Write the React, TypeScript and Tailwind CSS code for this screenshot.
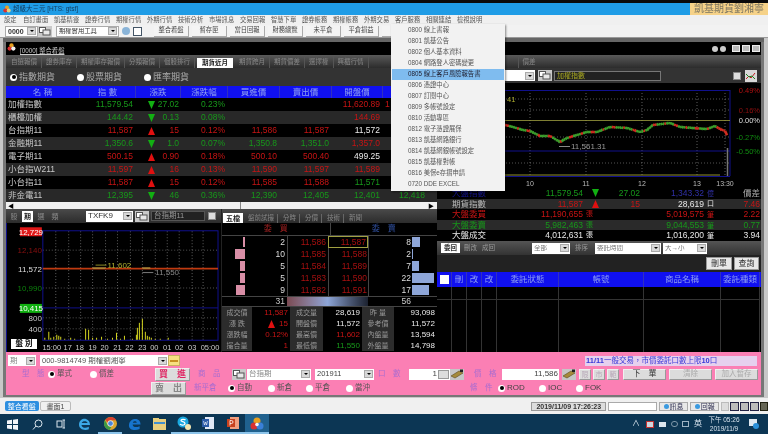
import React from "react";

const R = "text-[#c81414]";
const G = "text-[#17981a]";
const W = "text-[#e8e8e8]";

function Tri({ up, className = "" }: { up: boolean; className?: string }) {
  return (
    <svg width="7" height="8" viewBox="0 0 7 8" className={"shrink-0 " + className}>
      <polygon points={up ? "3.5,0 7,8 0,8" : "0,0 7,0 3.5,8"} fill={up ? "#e01010" : "#12b012"} />
    </svg>
  );
}

function Radio({ on, label, className = "" }: { on?: boolean; label?: string; className?: string }) {
  return (
    <span className={"inline-flex items-center gap-[2px] " + className}>
      <span className="w-[7px] h-[7px] rounded-full bg-white flex items-center justify-center shrink-0">
        {on && <span className="w-[4px] h-[4px] rounded-full bg-black" />}
      </span>
      {label && <span>{label}</span>}
    </span>
  );
}

function Select({ label, className = "", text = "text-[#333]" }: { label: string; className?: string; text?: string }) {
  return (
    <div className={"h-[11px] bg-white flex items-center justify-between pl-[2px] pr-[1px] leading-none " + text + " " + className}>
      <span className="truncate">{label}</span>
      <span className="w-[9px] h-[8px] bg-[#d8d8d8] border border-[#aaa] flex items-center justify-center shrink-0">
        <span className="w-0 h-0 border-x-[2px] border-x-transparent border-t-[2px] border-t-black" />
      </span>
    </div>
  );
}

function PicIcon() {
  return (
    <svg width="14" height="11" viewBox="0 0 14 11" className="shrink-0">
      <rect width="14" height="11" fill="#c9c9c9" />
      <rect x="1.5" y="1.5" width="6" height="5" fill="#fff" stroke="#555" />
      <rect x="5" y="4" width="7" height="5" fill="#e8e8e8" stroke="#555" />
    </svg>
  );
}

function MoneyIcon() {
  return (
    <svg width="14" height="11" viewBox="0 0 14 11" className="shrink-0">
      <rect width="14" height="11" fill="#c6c6c6" />
      <polygon points="1,7 9,2 13,4 5,9" fill="#a58a3a" stroke="#5a4a20" strokeWidth="0.6" />
      <rect x="10" y="0.5" width="3" height="2.5" fill="#222" />
    </svg>
  );
}

const menuBar = ["自訂畫面", "凱基精靈", "證券行情", "期權行情", "外期行情", "技術分析", "市場訊息", "交易回報", "智慧下單", "證券帳務", "期權帳務", "外期交易", "客戶服務", "相關連結", "檢視說明"];
const toolButtons = ["整合看盤", "暫存匣", "當日回報", "財務總覽", "未平倉", "平倉損益", "技術"];
const tabs = ["自選報價", "證券庫存", "期權庫存報價", "分類報價", "個股排行", "期貨近月", "期貨跨月", "期貨價差", "選擇權", "興櫃行情", "價差"];
const menuItems = ["0800 線上書報", "0801 凱基公告", "0802 個人基本資料", "0804 網路登人密碼變更", "0805 線上客戶風險報告書", "0806 憑證中心", "0807 訂閱中心", "0809 多帳號設定", "0810 活動專區", "0812 電子憑證展保", "0813 凱基網路銀行", "0814 凱基網銀帳號設定", "0815 凱基權對帳", "0816 美保e存摺申請", "0720 DDE EXCEL"];

type Cell = [string, string];
const quotes: { n: string; p: Cell; up: boolean; ch: string; pct: string; b: Cell; s: Cell; o: Cell; h: Cell }[] = [
  { n: "加權指數", p: ["11,579.54", G], up: false, ch: "27.02", pct: "0.23%", b: ["", G], s: ["", G], o: ["11,620.89", R], h: ["1", R] },
  { n: "櫃檯加權", p: ["144.42", G], up: false, ch: "0.13", pct: "0.08%", b: ["", G], s: ["", G], o: ["144.69", R], h: ["", R] },
  { n: "台指期11", p: ["11,587", R], up: true, ch: "15", pct: "0.12%", b: ["11,586", R], s: ["11,587", R], o: ["11,572", W], h: ["", R] },
  { n: "金融期11", p: ["1,350.6", G], up: false, ch: "1.0", pct: "0.07%", b: ["1,350.8", G], s: ["1,351.0", G], o: ["1,357.0", R], h: ["", R] },
  { n: "電子期11", p: ["500.15", R], up: true, ch: "0.90", pct: "0.18%", b: ["500.10", R], s: ["500.40", R], o: ["499.25", W], h: ["", R] },
  { n: "小台指W211", p: ["11,597", R], up: true, ch: "16", pct: "0.13%", b: ["11,590", R], s: ["11,597", R], o: ["11,589", R], h: ["", R] },
  { n: "小台指11", p: ["11,587", R], up: true, ch: "15", pct: "0.12%", b: ["11,585", R], s: ["11,588", R], o: ["11,571", G], h: ["", R] },
  { n: "非金電11", p: ["12,395", G], up: false, ch: "46", pct: "0.36%", b: ["12,390", G], s: ["12,405", G], o: ["12,401", G], h: ["12,418", G] },
];
const headers = ["名 稱", "指 數", "漲跌", "漲跌幅", "買進價", "賣出價", "開盤價", ""];

function pctColor(up: boolean) {
  return up ? R : G;
}

function MainChart() {
  const pts: [number, number][] = [[440, 120], [505, 125], [513, 127], [523, 130], [530, 131], [540, 136], [550, 136], [560, 142], [567, 138], [577, 135], [587, 132], [597, 132], [610, 127], [627, 128], [640, 132], [647, 130], [653, 125], [670, 123], [680, 127], [693, 128], [707, 129], [715, 126], [720, 129], [725, 131], [727, 135]];
  const segs: React.ReactNode[] = [];
  let i = 0;
  for (let k = 0; k < pts.length - 1; k++) {
    const [x0, y0] = pts[k];
    const [x1, y1] = pts[k + 1];
    const n = Math.max(1, Math.round((x1 - x0) / 2));
    for (let j = 0; j < n; j++) {
      const a = j / n;
      const b = (j + 1) / n;
      const jit = ((i * 37) % 5) * 0.3 - 0.6;
      const red = (i * 13) % 11 < 3 || x0 > 716;
      segs.push(
        <line key={i} x1={x0 + (x1 - x0) * a} y1={y0 + (y1 - y0) * a + jit} x2={x0 + (x1 - x0) * b} y2={y0 + (y1 - y0) * b - jit} stroke={red ? "#d02c20" : "#3c9e2c"} strokeWidth="2.6" />
      );
      i++;
    }
  }
  const vs = [530, 586, 642, 697, 725];
  return (
    <svg width="323" height="105" viewBox="437 83 323 105" className="block bg-black font-['Liberation_Sans',sans-serif]">
      {[99, 110, 137, 163].map((y) => (
        <line key={y} x1="440" x2="730" y1={y} y2={y} stroke="#777" strokeDasharray="1 2" strokeWidth="0.7" />
      ))}
      {vs.map((x) => (
        <line key={x} x1={x} x2={x} y1="90" y2="176" stroke="#888" strokeDasharray="1 2" strokeWidth="0.7" />
      ))}
      <line x1="440" x2="730" y1="90.5" y2="90.5" stroke="#10108c" />
      <line x1="440" x2="730" y1="151" y2="151" stroke="#10108c" />
      <line x1="440" x2="730" y1="176.5" y2="176.5" stroke="#10108c" />
      <line x1="730" x2="730" y1="90" y2="176" stroke="#10108c" />
      <line x1="440" x2="730" y1="120.5" y2="120.5" stroke="#a0a040" strokeWidth="0.8" />
      {segs}
      <line x1="440" x2="720" y1="175" y2="175" stroke="#8f8f30" strokeWidth="1.2" />
      <line x1="727.5" x2="727.5" y1="148" y2="176" stroke="#777" strokeWidth="1.5" />
      <line x1="559" x2="570" y1="146.5" y2="146.5" stroke="#aaa" strokeWidth="0.8" />
      <text x="571" y="149" fontSize="8" fill="#999">11,561.31</text>
      <text x="507" y="102" fontSize="7.5" fill="#b0b030">41</text>
      <g fontSize="7.5" textAnchor="end">
        <text x="760" y="93" fill="#b01010">0.49%</text>
        <text x="760" y="113" fill="#900f0f">0.16%</text>
        <text x="760" y="123" fill="#dddddd">0.00%</text>
        <text x="760" y="140" fill="#108a10">-0.27%</text>
        <text x="760" y="154" fill="#108a10">-0.50%</text>
      </g>
      <g fontSize="7" fill="#bbbbbb" textAnchor="middle">
        <text x="530" y="186">10</text>
        <text x="586" y="186">11</text>
        <text x="642" y="186">12</text>
        <text x="697" y="186">13</text>
        <text x="725" y="186">13:30</text>
      </g>
    </svg>
  );
}

function KChart() {
  const xs = [55, 68, 80, 92, 105, 117, 130, 142, 155, 167, 179, 192, 203];
  const bars: [number, number][] = [[44, 2], [48, 8], [50, 2], [53, 3], [56, 5], [58, 4], [60, 3], [64, 1], [70, 2], [74, 1], [85, 11], [88, 10], [92, 2], [96, 2], [101, 3], [107, 1], [112, 2], [116, 7], [120, 1], [124, 4], [132, 1], [136, 5], [137, 12], [139, 17], [142, 21], [145, 8], [147, 4], [149, 3], [151, 2], [155, 1], [160, 1], [168, 2]];
  const labels: [string, number][] = [["15:00", 51], ["17", 67], ["18", 79], ["19", 92], ["20", 104], ["21", 117], ["22", 129], ["23", 142], ["00", 154], ["01", 167], ["02", 179], ["03", 192], ["05:00", 210]];
  return (
    <svg width="214" height="129" viewBox="6 223 214 129" className="block bg-black font-['Liberation_Sans',sans-serif] border-l border-[#10108c]">
      {[250, 288, 318, 329].map((y) => (
        <line key={y} x1="42" x2="218" y1={y} y2={y} stroke="#777" strokeDasharray="1 2" strokeWidth="0.7" />
      ))}
      {xs.map((x) => (
        <line key={x} x1={x} x2={x} y1="231" y2="340" stroke="#888" strokeDasharray="1 2" strokeWidth="0.7" />
      ))}
      <rect x="42" y="230.5" width="176" height="110" fill="none" stroke="#10108c" />
      <line x1="42" x2="218" y1="308" y2="308" stroke="#10108c" />
      <line x1="42" x2="218" y1="268.5" y2="268.5" stroke="#c03a10" strokeWidth="1.6" />
      <line x1="92" x2="105" y1="268" y2="268" stroke="#a8883a" strokeWidth="1.6" />
      <line x1="142" x2="150" y1="268" y2="268" stroke="#a8883a" strokeWidth="1.6" />
      <line x1="95" x2="106" y1="265" y2="265" stroke="#b0b030" strokeWidth="0.8" />
      <text x="107" y="268" fontSize="8" fill="#b0b030">11,602</text>
      <line x1="142" x2="153" y1="272.5" y2="272.5" stroke="#999" strokeWidth="0.8" />
      <text x="155" y="275" fontSize="8" fill="#888">11,550</text>
      {bars.map(([x, h]) => (
        <line key={x} x1={x} x2={x} y1={340} y2={340 - h} stroke="#d8d820" strokeWidth="1" />
      ))}
      <rect x="19" y="227" width="22" height="9" fill="#e01818" />
      <text x="30" y="234.5" fontSize="8" fill="#fff" textAnchor="middle">12,729</text>
      <text x="41" y="253" fontSize="8" fill="#8a1010" textAnchor="end">12,140</text>
      <text x="41" y="272" fontSize="8" fill="#dddddd" textAnchor="end">11,572</text>
      <text x="41" y="291" fontSize="8" fill="#0c800c" textAnchor="end">10,990</text>
      <rect x="19" y="304" width="22" height="9" fill="#10b010" />
      <text x="30" y="311.5" fontSize="8" fill="#fff" textAnchor="middle">10,415</text>
      <text x="41" y="321" fontSize="8" fill="#cccccc" textAnchor="end">800</text>
      <text x="41" y="332" fontSize="8" fill="#cccccc" textAnchor="end">400</text>
      {labels.map(([t, x]) => (
        <text key={t} x={x} y="350" fontSize="7.5" fill="#cccccc" textAnchor="middle">{t}</text>
      ))}
    </svg>
  );
}

const levels = [
  { bq: 2, bw: 2, bp: "11,586", sp: "11,587", sq: 8, sw: 8, hl: true },
  { bq: 10, bw: 10, bp: "11,585", sp: "11,588", sq: 2, sw: 1 },
  { bq: 5, bw: 5, bp: "11,584", sp: "11,589", sq: 7, sw: 7 },
  { bq: 5, bw: 5, bp: "11,583", sp: "11,590", sq: 22, sw: 22 },
  { bq: 9, bw: 9, bp: "11,582", sp: "11,591", sq: 17, sw: 17 },
];
const barW: Record<number, string> = { 1: "w-[1px]", 2: "w-[2px]", 5: "w-[5px]", 7: "w-[7px]", 8: "w-[8px]", 9: "w-[9px]", 10: "w-[10px]", 17: "w-[17px]", 22: "w-[22px]" };

const info: [string, string, string, string, string, string, string, string, string][] = [
  ["成交價", "11,587", R, "成交量", "28,619", W, "昨 量", "93,098", W],
  ["漲 跌", "15", R, "開盤價", "11,572", W, "參考價", "11,572", W],
  ["漲跌幅", "0.12%", R, "最高價", "11,602", R, "內盤量", "13,594", W],
  ["撮合量", "1", R, "最低價", "11,550", G, "外盤量", "14,798", W],
];

const idx: { n: string; nc: string; a: string; ac: string; au?: string; tri?: boolean; up?: boolean; ch?: string; b: string; bc: string; bu: string; c: string; cc: string; bg: string }[] = [
  { n: "大盤指數", nc: "text-[#14148c]", a: "11,579.54", ac: G, tri: true, up: false, ch: "27.02", b: "1,343.32", bc: "text-[#3030a8]", bu: "億", c: "價差", cc: "text-[#aaa]", bg: "bg-black" },
  { n: "期貨指數", nc: "text-[#bbb]", a: "11,587", ac: R, tri: true, up: true, ch: "15", b: "28,619", bc: W, bu: "口", c: "7.46", cc: R, bg: "bg-[#2a2a2a]" },
  { n: "大盤委買", nc: R, a: "11,190,655", ac: R, au: "張", b: "5,019,575", bc: R, bu: "筆", c: "2.22", cc: R, bg: "bg-black" },
  { n: "大盤委賣", nc: G, a: "5,982,463", ac: G, au: "張", b: "9,044,553", bc: G, bu: "筆", c: "0.77", cc: G, bg: "bg-[#2a2a2a]" },
  { n: "大盤成交", nc: W, a: "4,012,631", ac: W, au: "張", b: "1,016,200", bc: W, bu: "筆", c: "3.94", cc: W, bg: "bg-black" },
];

const orderHead = ["", "刪", "改", "改", "委託狀態", "帳號", "商品名稱", "委託種類"];

function PinkBtn({ children, className = "" }: { children: React.ReactNode; className?: string }) {
  return (
    <div className={"bg-[#dcdcdc] border border-[#f0f0f0] border-b-[#999] border-r-[#999] flex items-center justify-center leading-none " + className}>
      {children}
    </div>
  );
}

function TaskIcons() {
  return (
    <>
      <div className="w-[25px] flex items-center justify-center">
        <svg width="11" height="11" viewBox="0 0 11 11"><path d="M0 1.5L5 .8V5H0zM6 .7L11 0v5H6zM0 6h5v4.2L0 9.5zM6 6h5v5L6 10.3z" fill="#f2f6fa" /></svg>
      </div>
      <div className="w-[24px] flex items-center justify-center">
        <svg width="11" height="11" viewBox="0 0 11 11" fill="none" stroke="#dbe6ee" strokeWidth="1"><circle cx="6.5" cy="4.5" r="3.5" /><path d="M4 7L1 10.5" /></svg>
      </div>
      <div className="w-[23px] flex items-center justify-center">
        <svg width="10" height="10" viewBox="0 0 10 10" fill="none" stroke="#dbe6ee" strokeWidth="1"><rect x="1" y="2" width="5" height="6" /><path d="M8 1v8M6.5 1H9M6.5 9H9" /></svg>
      </div>
      <div className="w-[26px] flex items-center justify-center">
        <svg width="14" height="14" viewBox="0 0 14 14" fill="none"><path d="M12 8H3.5C3.7 10.8 7.5 11.8 10.8 9.8v2.4C6.8 14 1 12.5 1 7.5 1 3 5.5 1 8 2c2.8 1 4 3.3 4 6zM9.5 6C9.5 3.8 4.3 3.5 3.7 6z" fill="#3ba7e4" /></svg>
      </div>
      <div className="w-[24px] h-full flex items-center justify-center border-b-2 border-[#8cc4ea]">
        <svg width="13" height="13" viewBox="0 0 14 14"><circle cx="7" cy="7" r="7" fill="#d9a62e" /><path d="M7 0a7 7 0 016.1 3.5H7A3.5 3.5 0 003.6 6L1.7 2.6A7 7 0 017 0z" fill="#d8412f" /><path d="M1 3.5L4.3 9.5A3.5 3.5 0 008 10.4L6 14A7 7 0 011 3.5z" fill="#3a9a46" /><circle cx="7" cy="7" r="3" fill="#4a86d8" stroke="#fff" strokeWidth="0.8" /></svg>
      </div>
      <div className="w-[25px] flex items-center justify-center">
        <svg width="13" height="13" viewBox="0 0 14 14"><path d="M1 8C1 3 5 1 8 1c3.5 0 5.5 2.5 5.5 6H5c.2 3 4 3.5 7.5 1.8v3C7.5 14.2 1 13 1 8zM9.5 5C9 3 6 3 5.2 5z" fill="#1774cc" /></svg>
      </div>
      <div className="w-[24px] h-full flex items-center justify-center">
        <svg width="13" height="12" viewBox="0 0 13 12"><rect y="1" width="13" height="11" fill="#e8cf7e" /><rect x="1" y="4" width="11" height="2" fill="#3f8fd0" /><rect y="0" width="6" height="2" fill="#e8cf7e" /></svg>
      </div>
      <div className="w-[25px] h-full flex items-center justify-center border-b-2 border-[#8cc4ea]">
        <svg width="14" height="14" viewBox="0 0 14 14"><circle cx="6" cy="6" r="5.5" fill="#19a8e0" /><path d="M3 8c1 1.5 5 1.5 5-.5S4 6 4 4.5 7.500 3 8.500 4" stroke="#fff" strokeWidth="1.3" fill="none" /><circle cx="11" cy="11" r="3" fill="#f2e6b0" /></svg>
      </div>
      <div className="w-[24px] h-full flex items-center justify-center border-b-2 border-[#8cc4ea]">
        <svg width="12" height="12" viewBox="0 0 12 12"><rect x="3" y="0" width="9" height="12" fill="#dfe8f6" /><rect x="0" y="2" width="7" height="8" fill="#2a5ba8" /><path d="M1.500 4l1 4 1-3 1 3 1-4" stroke="#fff" strokeWidth="0.6" fill="none" /></svg>
      </div>
      <div className="w-[25px] h-full flex items-center justify-center border-b-2 border-[#8cc4ea]">
        <svg width="12" height="12" viewBox="0 0 12 12"><rect x="3" y="0" width="9" height="12" fill="#f0a080" /><rect x="0" y="2" width="8" height="8" fill="#c8421e" /><path d="M3 8.500V3.500h1.500a1.300 1.300 0 010 3H3" stroke="#fff" strokeWidth="0.8" fill="none" /></svg>
      </div>
      <div className="w-[24px] h-full flex items-center justify-center bg-[#20618e] border-b-2 border-[#8cc4ea]">
        <svg width="14" height="13" viewBox="0 0 14 13"><circle cx="7" cy="4" r="3.500" fill="#e8a020" /><circle cx="4" cy="9" r="3.500" fill="#d83030" /><circle cx="10" cy="9" r="3.500" fill="#3a80d8" /><circle cx="7" cy="7.500" r="1.800" fill="#f4f4f4" /></svg>
      </div>
    </>
  );
}

export default function App() {
  return (
    <div className="relative w-[768px] h-[434px] overflow-hidden bg-[#c4c4c4] flex flex-col font-['Liberation_Sans','Noto_Sans_CJK_TC',sans-serif] blur-[0.5px]">
      {/* window chrome */}
      <div className="h-[3px] bg-[#0a0a0a] shrink-0" />
      <div className="h-[12px] bg-[#1f9ce6] shrink-0 flex items-center">
        <svg width="8" height="8" viewBox="0 0 14 13" className="ml-[3px]"><circle cx="7" cy="4" r="3.500" fill="#e8a020" /><circle cx="4" cy="9" r="3.500" fill="#d83030" /><circle cx="10" cy="9" r="3.500" fill="#e8d080" /></svg>
        <span className="ml-[2px] text-[6.5px] leading-none text-[#123a5c]">超級大三元 [HTS: gtsf]</span>
        <div className="ml-auto w-[78px] h-full bg-[#f6d288] flex items-center justify-center text-[10px] leading-none text-[#7a7460]">凱基期貨劉湘寧</div>
      </div>
      <div className="h-[10px] bg-[#f0f0f0] shrink-0 flex items-center pl-[4px] text-[6.3px] leading-none text-[#555]">
        <span className="w-[19px]">設定</span>
        <div className="flex gap-[5px]">
          {menuBar.map((m) => (
            <span key={m} className="w-[26px] whitespace-nowrap">{m}</span>
          ))}
        </div>
      </div>
      <div className="h-[13px] bg-[#f2f2f2] shrink-0 flex items-center pl-[5px] text-[6.3px] text-[#444] leading-none border-b border-[#999]">
        <Select label="0000" className="w-[33px] border border-[#aaa] font-bold text-[7px]" />
        <PicIcon />
        <Select label="期權實用工具" className="ml-[4px] w-[63px] border border-[#aaa]" />
        <span className="ml-[3px] w-[8px] h-[8px] rounded-full bg-[#8ab4d8]" />
        <span className="ml-[3px] w-[9px] h-[9px] bg-white border border-[#456]" />
        <div className="ml-[12px] flex gap-[3px]">
          {toolButtons.map((b) => (
            <div key={b} className="w-[35px] h-[11px] bg-[#f4f4f4] border-b border-r border-[#aaa] flex items-center justify-center">{b}</div>
          ))}
        </div>
      </div>

      {/* workspace */}
      <div className="flex-1 min-h-0 flex flex-col bg-[#c8c8c8] pl-[3px] pr-[4px]">
        <div className="h-[4px] shrink-0 bg-[#666]" />
        <div className="h-[353px] shrink-0 bg-black border-x-[3px] border-[#777] flex flex-col overflow-hidden">
          <div className="h-[13px] shrink-0 flex items-center pl-[1px] bg-black">
            <svg width="9" height="8" viewBox="0 0 14 13" className="mt-[-3px]"><circle cx="7" cy="4" r="3.500" fill="#e8a020" /><circle cx="4" cy="9" r="3.500" fill="#d83030" /><circle cx="10" cy="9" r="3.500" fill="#f0f0f0" /></svg>
            <span className="ml-[4px] mt-[5px] text-[6.3px] leading-none text-[#ccc] underline">[0000] 整合看盤</span>
            <div className="ml-auto mr-[1px] flex items-center gap-[2px]">
              <span className="w-[6px] h-[6px] rounded-full bg-[#ccc]" />
              <span className="w-[6px] h-[6px] rounded-full bg-[#ccc] mr-[4px]" />
              <span className="w-[8px] h-[7px] bg-[#bbb] border border-[#eee]" />
              <span className="w-[8px] h-[7px] bg-[#bbb] border border-[#eee]" />
              <span className="w-[8px] h-[7px] bg-[#bbb] border border-[#eee]" />
            </div>
          </div>
          <div className="h-[13px] shrink-0 bg-gradient-to-b from-[#5a5a5a] to-[#2c2c2c] flex items-end pl-[1px] text-[6.5px] leading-none text-[#888]">
            {tabs.map((t) =>
              t === "期貨近月" ? (
                <span key={t} className="h-[10px] w-[36px] mx-[2px] bg-white text-[#222] font-bold flex items-center justify-center">{t}</span>
              ) : (
                <span key={t} className={"h-[11px] flex items-center px-[4px] whitespace-nowrap " + (t === "價差" ? "ml-[149px] border-l border-[#555]" : "border-r border-[#555]")}>{t}</span>
              )
            )}
          </div>

          <div className="flex-1 min-h-0 flex">
            {/* left column */}
            <div className="w-[431px] shrink-0 flex flex-col">
              <div className="h-[18px] shrink-0 bg-[#333] flex items-center pl-[4px] text-[9px] text-[#aaa] leading-none gap-[22px]">
                <Radio on label="指數期貨" />
                <Radio label="股票期貨" />
                <Radio label="匯率期貨" />
              </div>
              <div className="h-[12px] shrink-0 bg-[#1010f0] text-[#8f9ff0] text-[8.5px] leading-none grid grid-cols-[74px_56px_45px_47px_52px_52px_51px_54px] items-center text-center">
                {headers.map((h, i) => (
                  <span key={i} className="border-r border-[#3030c0] h-full flex items-center justify-center">{h}</span>
                ))}
              </div>
              {quotes.map((q, i) => (
                <div key={q.n} className={"h-[13px] shrink-0 grid grid-cols-[74px_56px_45px_47px_52px_52px_51px_54px] items-center text-[8.5px] leading-none text-right " + (i % 2 ? "bg-[#282828]" : "bg-black")}>
                  <span className="text-left pl-[2px] text-[#c8c8c8] whitespace-nowrap">{q.n}</span>
                  <span className={"pr-[3px] " + q.p[1]}>{q.p[0]}</span>
                  <span className={"flex items-center justify-between pl-[12px] pr-[2px] " + pctColor(q.up)}>
                    <Tri up={q.up} />
                    {q.ch}
                  </span>
                  <span className={"pr-[3px] " + pctColor(q.up)}>{q.pct}</span>
                  <span className={"pr-[3px] " + q.b[1]}>{q.b[0]}</span>
                  <span className={"pr-[3px] " + q.s[1]}>{q.s[0]}</span>
                  <span className={"pr-[3px] " + q.o[1]}>{q.o[0]}</span>
                  <span className={(i === 0 ? "text-left pl-[2px] " : "pr-[12px] ") + q.h[1]}>{q.h[0]}</span>
                </div>
              ))}
              <div className="h-[7px] shrink-0 bg-[#f0f0f0] flex items-center justify-between">
                <span className="ml-[2px] w-[7px] text-[6px] leading-none text-black">◀</span>
                <span className="w-[1px] h-full bg-[#888] ml-[225px]" />
                <span className="ml-auto mr-[2px] w-[7px] text-[6px] leading-none text-black">▶</span>
              </div>
              <div className="flex-1 min-h-0 flex">
                {/* K chart */}
                <div className="w-[215px] shrink-0 flex flex-col bg-black">
                  <div className="h-[14px] shrink-0 bg-gradient-to-b from-[#4a4a4a] to-[#2c2c2c] flex items-center text-[7px] leading-none text-[#888]">
                    <span className="w-[16px] text-center">股</span>
                    <span className="w-[11px] h-[11px] bg-white text-[#222] font-bold flex items-center justify-center">期</span>
                    <span className="w-[16px] text-center">選</span>
                    <span className="w-[12px] text-center">類</span>
                    <Select label="TXFK9" className="ml-[25px] w-[47px] text-[8px]" />
                    <span className="ml-[2px]"><PicIcon /></span>
                    <span className="ml-[2px] w-[54px] h-[10px] bg-[#222] border border-[#555] text-[#999] text-[7.5px] flex items-center pl-[2px] whitespace-nowrap">台指期11</span>
                    <span className="ml-[3px] w-[8px] h-[8px] bg-[#ddd] border border-[#888]" />
                  </div>
                  <div className="relative flex-1">
                    <KChart />
                    <div className="absolute left-[5px] top-[116px] w-[26px] h-[10px] bg-white text-black font-bold text-[7.5px] leading-none flex items-center justify-center">盤 別</div>
                  </div>
                </div>
                {/* five levels */}
                <div className="flex-1 flex flex-col bg-black border-l border-[#222]">
                  <div className="h-[14px] shrink-0 bg-gradient-to-b from-[#4a4a4a] to-[#2c2c2c] flex items-end text-[6.5px] leading-none text-[#888]">
                    <span className="h-[10px] w-[20px] ml-[1px] bg-white text-[#222] font-bold flex items-center justify-center text-[7px]">五檔</span>
                    <span className="h-[9px] flex items-center px-[3px] ml-[2px] border-r border-[#666] whitespace-nowrap">盤前試撮</span>
                    <span className="h-[9px] flex items-center px-[3px] ml-[2px] border-r border-[#666] whitespace-nowrap">分時</span>
                    <span className="h-[9px] flex items-center px-[3px] ml-[2px] border-r border-[#666] whitespace-nowrap">分價</span>
                    <span className="h-[9px] flex items-center px-[3px] ml-[2px] border-r border-[#666] whitespace-nowrap">技術</span>
                    <span className="h-[9px] flex items-center px-[3px] ml-[2px] whitespace-nowrap">新聞</span>
                  </div>
                  <div className="h-[13px] shrink-0 grid grid-cols-2 text-[8px] leading-none items-center text-center border-b border-[#444]">
                    <span className="text-[#a02020]">委　買</span>
                    <span className="text-[#3050a0] h-full flex items-center justify-center border-l border-[#444]">委　賣</span>
                  </div>
                  {levels.map((l) => (
                    <div key={l.bp} className="h-[12px] shrink-0 grid grid-cols-[23px_42px_41px_40px_44px_24px] items-center text-[8.5px] leading-none text-right">
                      <span className="h-[10px] flex justify-end"><span className={"h-full bg-[#d88ea6] " + barW[l.bw]} /></span>
                      <span className="pr-[2px] text-[#ddd]">{l.bq}</span>
                      <span className="pr-[2px] text-[#a81010] h-full flex items-center justify-end border-l border-[#444]">{l.bp}</span>
                      <span className={"pr-[1px] text-[#a81010] h-full flex items-center justify-end border-l " + (l.hl ? "border border-[#a0a040]" : "border-[#444]")}>{l.sp}</span>
                      <span className="pr-[1px] text-[#ddd] h-full flex items-center justify-end border-l border-[#444]">{l.sq}</span>
                      <span className="h-[10px] flex justify-start"><span className={"h-full bg-[#8ea6d8] " + barW[l.sw]} /></span>
                    </div>
                  ))}
                  <div className="h-[11px] shrink-0 grid grid-cols-[65px_81px_44px_24px] items-center text-[8.5px] leading-none text-[#ccc] border-y border-[#444]">
                    <span className="text-right pr-[2px]">31</span>
                    <span className="h-full bg-gradient-to-r from-[#7a4a52] via-[#8ea6d8] to-[#1c2230]" />
                    <span className="text-right pr-[1px]">56</span>
                    <span />
                  </div>
                  {info.map((r, i) => (
                    <div key={r[0]} className="h-[11px] shrink-0 grid grid-cols-[30px_38px_33px_39px_32px_42px] items-center text-[7.5px] leading-none">
                      <span className="h-full bg-[#2c2c2c] text-[#999] flex items-center justify-center text-[7px]">{r[0]}</span>
                      <span className={"h-full bg-black flex items-center justify-end pr-[2px] gap-[4px] text-[8px] " + r[2]}>{i === 1 && <Tri up />}{r[1]}</span>
                      <span className="h-full bg-[#2c2c2c] text-[#999] flex items-center justify-center text-[7px]">{r[3]}</span>
                      <span className={"h-full bg-black flex items-center justify-end pr-[2px] text-[8px] " + r[5]}>{r[4]}</span>
                      <span className="h-full bg-[#2c2c2c] text-[#999] flex items-center justify-center text-[7px]">{r[6]}</span>
                      <span className={"h-full bg-black flex items-center justify-end pr-[1px] text-[8px] " + r[8]}>{r[7]}</span>
                    </div>
                  ))}
                </div>
              </div>
            </div>

            {/* right column */}
            <div className="flex-1 min-w-0 flex flex-col">
              <div className="h-[15px] shrink-0 bg-[#333] flex items-center text-[7px] leading-none">
                <Select label="" className="ml-[40px] w-[58px]" />
                <span className="ml-[3px]"><PicIcon /></span>
                <span className="ml-[2px] w-[107px] h-[10px] bg-[#222] border border-[#777] text-[#a8a820] flex items-center pl-[2px]">加權指數</span>
                <span className="ml-[72px] w-[8px] h-[8px] bg-[#ddd] border border-[#888]" />
                <svg width="12" height="12" viewBox="0 0 12 12" className="ml-[4px]"><rect width="12" height="12" fill="#d8d8d8" /><path d="M1 9l3-3 2 2 4-5" stroke="#c02020" fill="none" /><path d="M1 4l3 3 3-1 3 3" stroke="#208020" fill="none" /></svg>
              </div>
              <MainChart />
              <div className="shrink-0 h-[53px]">
                {idx.map((r) => (
                  <div key={r.n} className={"h-[10.6px] grid grid-cols-[15px_45px_86px_24px_35px_62px_20px_36px] items-center text-[8.5px] leading-none " + r.bg}>
                    <span />
                    <span className={"text-[8.5px] whitespace-nowrap " + r.nc}>{r.n}</span>
                    <span className={"text-right relative " + r.ac}>{r.a}{r.au && <span className="absolute left-full ml-[3px] text-[7px]">{r.au}</span>}</span>
                    <span className="flex justify-center">{r.tri && <Tri up={!!r.up} />}</span>
                    <span className={"text-right pr-[2px] " + (r.up ? R : G)}>{r.ch}</span>
                    <span className={"text-right " + r.bc}>{r.b}</span>
                    <span className={"pl-[3px] text-[7px] " + r.bc}>{r.bu}</span>
                    <span className={"text-right " + r.cc}>{r.c}</span>
                  </div>
                ))}
              </div>
              <div className="h-[14px] shrink-0 bg-gradient-to-b from-[#555] to-[#333] flex items-center text-[6.5px] leading-none text-[#999]">
                <span className="ml-[4px] h-[10px] w-[19px] bg-white text-[#333] font-bold flex items-center justify-center">委回</span>
                <span className="ml-[4px]">刪改</span>
                <span className="ml-[5px]">成回</span>
                <Select label="全部" className="ml-[37px] w-[38px]" text="text-[#777]" />
                <span className="ml-[5px] w-[17px]">排序</span>
                <Select label="委託時間" className="ml-[3px] w-[66px]" text="text-[#777]" />
                <Select label="大→小" className="ml-[2px] w-[44px]" text="text-[#777]" />
              </div>
              <div className="h-[17px] shrink-0 bg-[#222] flex items-center justify-end gap-[2px] pr-[2px] text-[8px] leading-none text-[#333]">
                <div className="w-[26px] h-[13px] bg-[#e8e8e8] border border-[#999] flex items-center justify-center">刪單</div>
                <div className="w-[25px] h-[13px] bg-[#e8e8e8] border border-[#999] flex items-center justify-center">查詢</div>
              </div>
              <div className="h-[15px] shrink-0 bg-[#1010f0] grid grid-cols-[15px_15px_15px_15px_62px_85px_77px_39px] items-center text-center text-[8.5px] leading-none text-[#8f9ff0]">
                {orderHead.map((h, i) => (
                  <span key={i} className="h-full flex items-center justify-center border-r border-[#3030c0] whitespace-nowrap overflow-hidden">
                    {i === 0 ? <span className="w-[9px] h-[9px] bg-white" /> : h}
                  </span>
                ))}
              </div>
              <div className="flex-1 bg-black grid grid-cols-[15px_15px_15px_15px_62px_85px_77px_39px]">
                {orderHead.map((h, i) => (
                  <span key={i} className="border-r border-[#333] relative">
                    <span className="block h-[13px] border-b border-[#333]" />
                  </span>
                ))}
              </div>
            </div>
          </div>

          {/* order form */}
          <div className="h-[43px] shrink-0 bg-[#fb7fb4] relative text-[7.5px] leading-none text-[#a86cd0]">
            <div className="h-[15px] flex items-center pl-[2px] pt-[2px]">
              <Select label="期" className="w-[28px]" text="text-[#888]" />
              <Select label="000-9814749 期權劉湘寧" className="ml-[4px] w-[128px] text-[7.5px]" text="text-[#555]" />
              <span className="w-[12px] h-[11px] bg-[#f8e080] border border-[#c8b060] flex items-center justify-center">
                <span className="w-[8px] h-[2px] bg-[#c89020]" />
              </span>
            </div>
            <div className="h-[14px] flex items-center">
              <span className="ml-[16px] w-[26px]">型　態</span>
              <Radio on label="單式" className="text-[#555]" />
              <Radio label="價差" className="ml-[18px] text-[#555]" />
              <PinkBtn className="ml-[41px] w-[35px] h-[13px] text-[#e02060] text-[9px] font-bold">買　進</PinkBtn>
              <span className="ml-[8px] w-[34px]">商　品</span>
              <PicIcon />
              <Select label="台指期" className="ml-[1px] w-[64px]" text="text-[#888]" />
              <Select label="201911" className="ml-[4px] w-[59px]" text="text-[#444]" />
              <span className="ml-[4px] w-[31px]">口　數</span>
              <div className="w-[41px] h-[11px] bg-white flex items-center justify-between pr-[1px] text-[#444] text-[8px]">
                <span className="ml-auto mr-[1px]">1</span>
                <span className="w-[11px] h-[9px] bg-[#ddd] border border-[#999]" />
              </div>
              <MoneyIcon />
              <span className="ml-[10px] w-[28px]">價　格</span>
              <div className="w-[57px] h-[11px] bg-white flex items-center justify-end pr-[1px] text-[#444] text-[8px]">11,586</div>
              <span className="ml-[3px]"><MoneyIcon /></span>
              <div className="ml-[3px] flex gap-[2px] text-[#b8a8b8] text-[7px]">
                <PinkBtn className="w-[12px] h-[11px]">限</PinkBtn>
                <PinkBtn className="w-[12px] h-[11px]">市</PinkBtn>
                <PinkBtn className="w-[12px] h-[11px]">範</PinkBtn>
              </div>
              <PinkBtn className="ml-[4px] w-[43px] h-[11px] text-[#333] text-[8px]">下　單</PinkBtn>
              <PinkBtn className="ml-[3px] w-[43px] h-[11px] text-[#aaa]">清除</PinkBtn>
              <PinkBtn className="ml-[3px] w-[43px] h-[11px] text-[#aaa]">加入暫存</PinkBtn>
            </div>
            <div className="h-[14px] flex items-center">
              <PinkBtn className="ml-[145px] w-[35px] h-[13px] text-[#888] text-[9px] font-bold">賣　出</PinkBtn>
              <span className="ml-[8px] w-[34px]">新平倉</span>
              <Radio on label="自動" className="text-[#555] w-[40px]" />
              <Radio label="新倉" className="text-[#555] w-[38px]" />
              <Radio label="平倉" className="text-[#555] w-[40px]" />
              <Radio label="當沖" className="text-[#555] w-[40px]" />
              <span className="ml-[84px] w-[28px]">條　件</span>
              <Radio on label="ROD" className="text-[#444] text-[8px] w-[41px]" />
              <Radio label="IOC" className="text-[#444] text-[8px] w-[37px]" />
              <Radio label="FOK" className="text-[#444] text-[8px]" />
            </div>
            <div className="absolute left-[579px] top-[4px] w-[172px] h-[10px] bg-[#e6d0ee] text-[#3838d8] text-[7.5px] flex items-center pl-[1px] whitespace-nowrap">
              <b>11/11</b>一般交易，市價委託口數上限<b>10</b>口
            </div>
          </div>
        </div>

        <div className="h-[2px] shrink-0 bg-[#777]" />
      </div>

      {/* sheet tabs and status */}
      <div className="h-[16px] shrink-0 bg-[#f0f0f0] flex items-center text-[7px] leading-none">
        <div className="ml-[5px] w-[34px] h-[10px] rounded-[2px] bg-[#2e8fe0] text-white flex items-center justify-center">整合看盤</div>
        <div className="ml-[1px] w-[32px] h-[10px] rounded-[2px] border border-[#bbb] text-[#444] flex items-center justify-center">畫面1</div>
        <div className="ml-[460px] w-[76px] h-[9px] bg-[#ddd] border border-[#999] text-[#333] text-[7px] font-bold flex items-center justify-center whitespace-nowrap">2019/11/09 17:26:23</div>
        <div className="ml-[2px] w-[49px] h-[9px] bg-white border border-[#aaa]" />
        <div className="ml-[2px] w-[30px] h-[9px] bg-[#e8e8e8] border border-[#aaa] text-[#335] flex items-center justify-center gap-[1px]"><span className="w-[5px] h-[5px] rounded-full bg-[#3a9ae0]" />訊息</div>
        <div className="ml-[2px] w-[29px] h-[9px] bg-[#e8e8e8] border border-[#aaa] text-[#335] flex items-center justify-center gap-[1px]"><span className="w-[5px] h-[5px] rounded-full bg-[#3a9ae0]" />回報</div>
        <div className="ml-[2px] flex gap-[1px]">
          <span className="w-[8px] h-[9px] bg-[#ddd] border border-[#bbb]" />
          <span className="w-[9px] h-[9px] bg-[#bbb] border border-[#224]" />
          <span className="w-[9px] h-[9px] bg-[#bbb] border border-[#224]" />
          <span className="w-[9px] h-[9px] bg-[#bbb] border border-[#224]" />
          <span className="w-[8px] h-[9px] bg-[#665] border border-[#221]" />
        </div>
      </div>

      {/* taskbar */}
      <div className="h-[20px] shrink-0 bg-[#0c3654] flex items-stretch text-[#d8e4ee]">
        <TaskIcons />
        <div className="ml-auto flex items-center">
          <span className="text-[8px] leading-none">∧</span>
          <span className="ml-[6px] w-[8px] h-[7px] bg-[#cfd8e0] border border-[#c03030]" />
          <span className="ml-[5px] w-[7px] h-[5px] bg-[#dde6ee]" />
          <span className="ml-[5px] w-[7px] h-[6px] border border-[#7f98aa] rounded-full" />
          <span className="ml-[4px] w-[7px] h-[6px] border border-[#9fb4c4]" />
          <span className="ml-[5px] text-[8px] leading-none">英</span>
          <div className="ml-[4px] w-[36px] text-center text-[6.5px] leading-[9px] whitespace-nowrap">
            <div>下午 05:26</div>
            <div>2019/11/9</div>
          </div>
          <div className="ml-[7px] mr-[9px] w-[10px] h-[10px] relative">
            <span className="block w-[8px] h-[7px] bg-[#dfe8ef]" />
            <span className="absolute right-0 bottom-0 w-[6px] h-[6px] rounded-full bg-[#2a8fd8]" />
          </div>
        </div>
      </div>

      {/* open dropdown menu */}
      <div className="absolute left-[391px] top-[24px] w-[114px] h-[167px] bg-[#f2f2f2] shadow-[1px_1px_2px_rgba(0,0,0,0.45)] pt-[1px] text-[6.3px] text-[#555] leading-none">
        {menuItems.map((m, i) => (
          <div key={m} className={"h-[11px] flex items-center pl-[16px] mx-[1px] whitespace-nowrap " + (i === 4 ? "bg-[#7fbcef] text-[#223]" : "")}>{m}</div>
        ))}
      </div>
    </div>
  );
}
